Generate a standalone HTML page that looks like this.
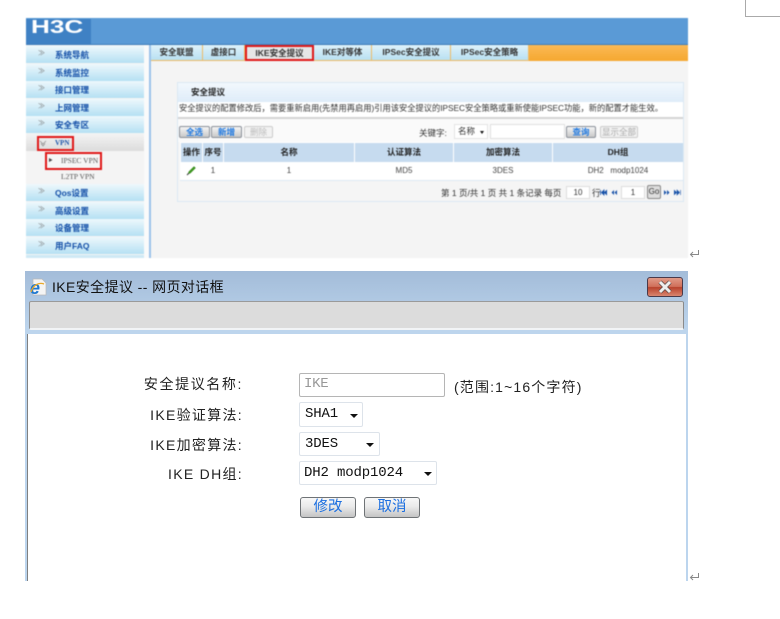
<!DOCTYPE html>
<html lang="zh">
<head>
<meta charset="utf-8">
<style>
html,body{margin:0;padding:0;background:#fff;}
body{width:780px;height:619px;position:relative;overflow:hidden;font-family:"Liberation Sans","Noto Sans CJK SC",sans-serif;}
.a{position:absolute;box-sizing:border-box;white-space:nowrap;}
#top{position:absolute;left:0;top:0;width:780px;height:265px;filter:blur(.5px);font-size:8.5px;color:#333;}
.side{left:26px;width:118px;height:17px;background:linear-gradient(#eef8fc,#b5e0f3);color:#1550a8;font-weight:bold;line-height:18px;padding-left:29px;font-size:8.5px;}
.arr{left:38px;width:7px;height:8px;color:#777;font-size:7px;line-height:8px;}
.tab{top:45px;height:16px;background:linear-gradient(#dff2fa,#b8e0f2);border-right:1px solid #eebb66;text-align:center;line-height:15px;color:#333;font-weight:bold;font-size:8.5px;border-bottom:1px solid #eebb66;}
.th{top:143px;height:19px;background:#c6dbef;font-weight:bold;text-align:center;line-height:19px;color:#222;font-size:8.5px;}
.td{top:163px;height:16px;line-height:16px;text-align:center;color:#444;font-size:8px;}
.btn{top:126px;height:12px;border:1px solid #8a9099;border-radius:2px;background:linear-gradient(#f5f5f5,#c8c8c8);color:#1e78e0;text-align:center;line-height:10px;font-size:8.5px;font-weight:bold;}
.dis{color:#bbb;border-color:#ccc;background:#f2f2f2;font-weight:normal;}
.lab{right:537px;font-size:14px;color:#222;line-height:18px;}
.sel{left:299px;border:1px solid #dde3ea;border-radius:2px;background:#fff;font-family:"Liberation Mono","Noto Sans CJK SC",monospace;font-size:14px;letter-spacing:-.15px;color:#111;line-height:23px;padding-left:5px;}
.tri{width:0;height:0;border-left:4px solid transparent;border-right:4px solid transparent;border-top:4px solid #111;}
.b2{top:497px;width:56px;height:21px;border:1px solid #6f7376;border-radius:3px;background:linear-gradient(#f8f8f8,#eaeaea 45%,#c4c4c4);color:#1c6fe0;text-align:center;font-size:14.5px;line-height:18px;}
</style>
</head>
<body>
<div class="a" style="left:745px;top:0;width:35px;height:17px;border-left:1px solid #aaa;border-bottom:1px solid #aaa;"></div>

<div id="top">
  <div class="a" style="left:26px;top:18px;width:662px;height:27px;background:#5a9ad6;border-bottom:1px solid #3f7db9;"></div>
  <div class="a" style="left:26px;top:19px;width:65px;height:25px;background:#3f81c4;"></div>
  <div class="a" style="left:31px;top:17px;color:#fff;font-size:18px;font-weight:bold;line-height:20px;transform:scaleX(1.45);transform-origin:left;">H3C</div>

  <div class="a" style="left:26px;top:45px;width:662px;height:213px;background:#f4f4f4;"></div>
  <div class="a" style="left:149px;top:45px;width:2px;height:213px;background:#9cc3ea;"></div>
  <div class="a" style="left:144px;top:45px;width:5px;height:213px;background:#fafafa;"></div>
  <div class="a" style="left:529px;top:45px;width:159px;height:16px;background:linear-gradient(#fbb955,#f5a830);"></div>

  <div class="a tab" style="left:151px;width:52px;">安全联盟</div>
  <div class="a tab" style="left:203px;width:42px;">虚接口</div>
  <div class="a tab" style="left:245px;width:69px;background:#e6e6e6;border:2px solid #e01818;line-height:12px;">IKE安全提议</div>
  <div class="a tab" style="left:314px;width:58px;">IKE对等体</div>
  <div class="a tab" style="left:372px;width:79px;">IPSec安全提议</div>
  <div class="a tab" style="left:451px;width:78px;">IPSec安全策略</div>

  <div class="a side" style="top:46px;">系统导航</div>
  <div class="a side" style="top:64px;">系统监控</div>
  <div class="a side" style="top:81px;">接口管理</div>
  <div class="a side" style="top:99px;">上网管理</div>
  <div class="a side" style="top:116px;">安全专区</div>
  <div class="a" style="left:26px;top:134px;width:118px;height:17px;background:linear-gradient(#f3f3f3,#dcdcdc);"></div>
  <div class="a side" style="top:184px;">Qos设置</div>
  <div class="a side" style="top:202px;">高级设置</div>
  <div class="a side" style="top:219px;">设备管理</div>
  <div class="a side" style="top:237px;">用户FAQ</div>
  <div class="a" style="left:26px;top:255px;width:118px;height:3px;background:#cfe9f5;"></div>

  <div class="a arr" style="top:50px;">≫</div>
  <div class="a arr" style="top:68px;">≫</div>
  <div class="a arr" style="top:85px;">≫</div>
  <div class="a arr" style="top:103px;">≫</div>
  <div class="a arr" style="top:120px;">≫</div>
  <div class="a arr" style="top:188px;">≫</div>
  <div class="a arr" style="top:206px;">≫</div>
  <div class="a arr" style="top:223px;">≫</div>
  <div class="a arr" style="top:241px;">≫</div>

  <div class="a" style="left:37px;top:136px;width:37px;height:15px;border:2px solid #e01818;color:#1550a8;font-weight:bold;line-height:11px;padding-left:16px;font-size:7px;font-family:'Liberation Serif',serif;">VPN</div>
  <svg class="a" style="left:39px;top:140px;" width="8" height="7" viewBox="0 0 8 7"><path d="M1 1L4 4L7 1M2 3.5L4 6L6 3.5" fill="none" stroke="#888" stroke-width=".7"/></svg>
  <div class="a" style="left:45px;top:152px;width:57px;height:18px;border:2px solid #e01818;background:#f6f6f6;color:#555;line-height:14px;padding-left:14px;font-size:7.5px;font-family:'Liberation Serif',serif;">IPSEC VPN</div>
  <svg class="a" style="left:48px;top:157px;" width="6" height="6" viewBox="0 0 6 6"><path d="M1 1L4.5 3L1 5Z" fill="#444"/></svg>
  <div class="a" style="left:61px;top:171px;color:#555;font-size:7.5px;line-height:11px;font-family:'Liberation Serif',serif;">L2TP VPN</div>

  <!-- panel -->
  <div class="a" style="left:177px;top:82px;width:507px;height:120px;border:1px solid #dbe8f3;background:#f5f5f5;"></div>
  <div class="a" style="left:178px;top:83px;width:505px;height:19px;background:linear-gradient(#f2f8fd,#deecf9);font-weight:bold;line-height:18px;padding-left:13px;color:#222;">安全提议</div>
  <div class="a" style="left:178px;top:102px;width:505px;height:15px;background:#fff;"></div>
  <div class="a" style="left:179px;top:103px;line-height:12px;color:#333;font-size:8.25px;">安全提议的配置修改后，需要重新启用(先禁用再启用)引用该安全提议的IPSEC安全策略或重新使能IPSEC功能，新的配置才能生效。</div>
  <div class="a" style="left:178px;top:117px;width:505px;height:2px;background:#d4d4d4;"></div>
  <div class="a" style="left:178px;top:119px;width:505px;height:23px;background:#fafafa;"></div>

  <div class="a btn" style="left:179px;width:31px;">全选</div>
  <div class="a btn" style="left:211px;width:31px;">新增</div>
  <div class="a btn dis" style="left:244px;width:29px;">删除</div>
  <div class="a" style="left:419px;top:127px;line-height:12px;color:#333;">关键字:</div>
  <div class="a" style="left:454px;top:124px;width:34px;height:15px;border:1px solid #e4e4e4;background:#fff;line-height:12px;padding-left:3px;">名称</div>
  <div class="a tri" style="left:480px;top:131px;border-left-width:2.5px;border-right-width:2.5px;border-top-width:3px;"></div>
  <div class="a" style="left:490px;top:124px;width:75px;height:15px;border:1px solid #e0e0e0;background:#fff;"></div>
  <div class="a btn" style="left:566px;width:30px;">查询</div>
  <div class="a btn dis" style="left:600px;width:38px;color:#aaa;">显示全部</div>

  <!-- table -->
  <div class="a" style="left:180px;top:142px;width:503px;height:39px;background:#fff;border-bottom:1px solid #dde8f2;"></div>
  <div class="a th" style="left:181px;width:21px;">操作</div>
  <div class="a th" style="left:203px;width:20px;">序号</div>
  <div class="a th" style="left:224px;width:130px;">名称</div>
  <div class="a th" style="left:355px;width:98px;">认证算法</div>
  <div class="a th" style="left:454px;width:98px;">加密算法</div>
  <div class="a th" style="left:553px;width:130px;">DH组</div>
  <svg class="a" style="left:186px;top:165px;" width="11" height="11" viewBox="0 0 11 11"><path d="M2 9 L3 6.5 L8 1.5 L9.5 3 L4.5 8 Z" fill="#3f9a22" stroke="#2c7a14" stroke-width=".5"/><path d="M1 10 L2 9 L2.6 8.2" stroke="#333" stroke-width="1" fill="none"/></svg>
  <div class="a td" style="left:203px;width:20px;">1</div>
  <div class="a td" style="left:224px;width:130px;">1</div>
  <div class="a td" style="left:355px;width:98px;">MD5</div>
  <div class="a td" style="left:454px;width:98px;">3DES</div>
  <div class="a td" style="left:553px;width:130px;">DH2 &nbsp; modp1024</div>

  <div class="a" style="left:441px;top:187px;line-height:12px;color:#333;">第 1 页/共 1 页 共 1 条记录 每页</div>
  <div class="a" style="left:566px;top:186px;width:24px;height:13px;border:1px solid #ddd;background:#fff;text-align:center;line-height:11px;font-size:8px;">10</div>
  <div class="a" style="left:592px;top:187px;line-height:12px;color:#333;">行</div>
  <svg class="a" style="left:600px;top:189px;" width="7" height="7" viewBox="0 0 7 7"><path d="M0.5 1V6M4 1L1.5 3.5L4 6ZM7 1L4.5 3.5L7 6Z" fill="#1550a8" stroke="#1550a8" stroke-width=".8"/></svg>
  <svg class="a" style="left:611px;top:189px;" width="6" height="7" viewBox="0 0 6 7"><path d="M3 1L.5 3.5L3 6ZM6 1L3.5 3.5L6 6Z" fill="#1550a8"/></svg>
  <div class="a" style="left:621px;top:186px;width:24px;height:13px;border:1px solid #ddd;background:#fff;text-align:center;line-height:11px;font-size:8px;">1</div>
  <div class="a" style="left:647px;top:185px;width:14px;height:14px;border:1px solid #888;border-radius:2px;background:#ddd;text-align:center;line-height:12px;font-size:8px;">Go</div>
  <svg class="a" style="left:664px;top:189px;" width="6" height="7" viewBox="0 0 6 7"><path d="M0 1L2.5 3.5L0 6ZM3 1L5.5 3.5L3 6Z" fill="#1550a8"/></svg>
  <svg class="a" style="left:674px;top:189px;" width="7" height="7" viewBox="0 0 7 7"><path d="M0 1L2.5 3.5L0 6ZM3 1L5.5 3.5L3 6ZM6.5 1V6" fill="#1550a8" stroke="#1550a8" stroke-width=".6"/></svg>
</div>

<svg class="a" style="left:689px;top:249px;" width="11" height="10" viewBox="0 0 11 10"><path d="M9.5 1V5.5H1.5M4 3L1.5 5.5L4 8" fill="none" stroke="#888" stroke-width="1"/></svg>
<svg class="a" style="left:689px;top:572px;" width="11" height="10" viewBox="0 0 11 10"><path d="M9.5 1V5.5H1.5M4 3L1.5 5.5L4 8" fill="none" stroke="#888" stroke-width="1"/></svg>

<!-- dialog -->
<div class="a" style="left:25px;top:271px;width:663px;height:310px;background:linear-gradient(#a3bcd9,#bdd5ed 60px,#bcd5ee);"></div>
<svg class="a" style="left:30px;top:278px;" width="18" height="18" viewBox="0 0 18 18"><path d="M3 1H12L16 5V17H3Z" fill="#f4f4f4" stroke="#b8b8b8" stroke-width=".7"/><text x="0" y="16" font-family="Liberation Sans" font-size="18" font-weight="bold" font-style="italic" fill="#1f78d0">e</text><path d="M1 14C3 7 9 4 14 6" fill="none" stroke="#e9a92a" stroke-width="1.3"/></svg>
<div class="a" style="left:52px;top:278px;font-size:14px;line-height:18px;color:#111;letter-spacing:.4px;">IKE安全提议 -- 网页对话框</div>
<div class="a" style="left:647px;top:277px;width:36px;height:20px;border:1px solid #4a3a4a;border-radius:3px;background:linear-gradient(#e09a88,#d0705a 48%,#b8422c 52%,#d98670);"></div>
<svg class="a" style="left:647px;top:277px;" width="36" height="20" viewBox="0 0 36 20"><path d="M13 5L23 15M23 5L13 15" stroke="#5a4a4a" stroke-width="4.4"/><path d="M13 5L23 15M23 5L13 15" stroke="#eeeeee" stroke-width="3"/></svg>
<div class="a" style="left:29px;top:301px;width:655px;height:29px;background:#dcdcdc;border:1px solid #f4f6f8;border-left-color:#8e8e8e;border-right-color:#8a8a8a;border-top-color:#9a9a9a;border-bottom:2px solid #f2f4f6;border-radius:2px;"></div>
<div class="a" style="left:28px;top:334px;width:658px;height:247px;background:#fff;"></div>
<div class="a" style="left:27px;top:334px;width:1px;height:247px;background:#808080;"></div>

<div class="a lab" style="top:375px;letter-spacing:1.6px;">安全提议名称:</div>
<div class="a lab" style="top:406px;letter-spacing:1.3px;">IKE验证算法:</div>
<div class="a lab" style="top:436px;letter-spacing:1.3px;">IKE加密算法:</div>
<div class="a lab" style="top:465px;letter-spacing:1.3px;">IKE DH组:</div>

<div class="a" style="left:299px;top:373px;width:146px;height:24px;border:1px solid #b5b5b5;border-radius:2px;background:#fff;font-family:'Liberation Mono',monospace;font-size:14px;letter-spacing:-.3px;color:#999;line-height:21px;padding-left:4px;">IKE</div>
<div class="a" style="left:454px;top:378px;font-size:14px;color:#222;line-height:18px;letter-spacing:1.15px;">(范围:1~16个字符)</div>

<div class="a sel" style="top:402px;width:64px;height:25px;">SHA1</div>
<div class="a tri" style="left:350px;top:414px;"></div>
<div class="a sel" style="top:432px;width:81px;height:24px;">3DES</div>
<div class="a tri" style="left:366px;top:443px;"></div>
<div class="a sel" style="top:461px;width:138px;height:24px;padding-left:4px;">DH2 modp1024</div>
<div class="a tri" style="left:424px;top:472px;"></div>

<div class="a b2" style="left:300px;">修改</div>
<div class="a b2" style="left:364px;">取消</div>
</body>
</html>
